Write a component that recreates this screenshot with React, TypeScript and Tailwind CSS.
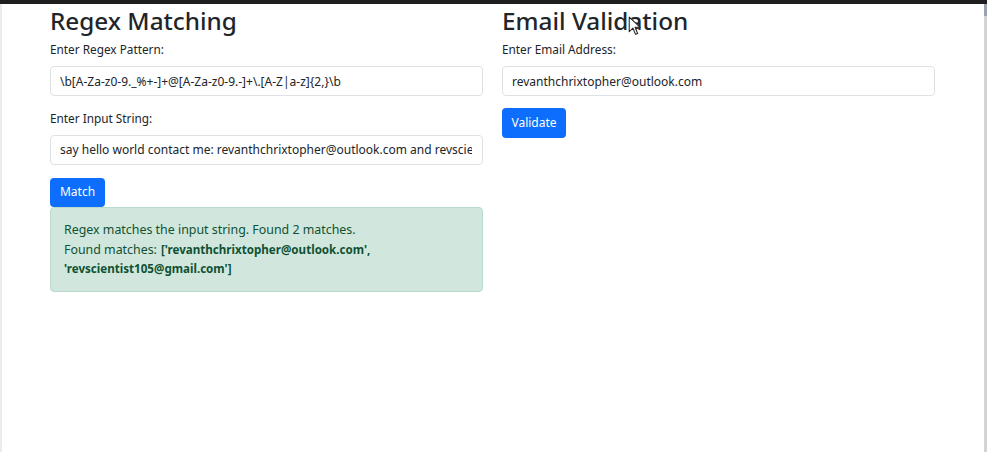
import React from "react";

const font = { fontFamily: '"Noto Sans", "Open Sans", Arial, sans-serif' };

function Label({ children }: { children: React.ReactNode }) {
  return <div className="text-[11.8px] leading-[19.5px] text-[#212529] mb-[6.5px]">{children}</div>;
}

function Field({ value }: { value: string }) {
  return (
    <input
      readOnly
      value={value}
      style={font}
      className="block w-full h-[30px] border border-[#dee2e6] rounded-[4px] pl-[9px] pr-[10px] text-[12px] text-[#212529] bg-white outline-none"
    />
  );
}

export default function App() {
  return (
    <div style={font} className="relative w-[987px] h-[452px] bg-white overflow-hidden flex flex-col">
      <div className="h-[4px] bg-[#1e1e1e] shrink-0" />
      <div className="flex flex-1">
        <div className="w-[2px] bg-[#ececec]" />
        <div className="flex-1 flex gap-[19px] pl-[48px]">
          <div className="w-[433px]">
            <h2 className="text-[24.3px] leading-[31px] pt-[1px] font-medium text-[#212529] mb-[4px]">Regex Matching</h2>
            <Label>Enter Regex Pattern:</Label>
            <Field value={"\\b[A-Za-z0-9._%+-]+@[A-Za-z0-9.-]+\\.[A-Z|a-z]{2,}\\b"} />
            <div className="h-[12.5px]" />
            <Label>Enter Input String:</Label>
            <Field value="say hello world contact me: revanthchrixtopher@outlook.com and revscientist105@gmail.com" />
            <button className="mt-[13px] h-[29px] w-[55px] rounded-[4px] bg-[#0d6efd] text-white text-[12px] leading-none">
              Match
            </button>
            <div className="border border-[#badbcc] bg-[#d1e7dd] rounded-[4px] px-[13px] py-[12.5px] text-[12.4px] leading-[19.5px] text-[#0f5132]">
              <div>Regex matches the input string. Found 2 matches.</div>
              <div>
                <span className="mr-[4px]">Found matches:</span>
                <b className="font-bold text-[11.6px]">['revanthchrixtopher@outlook.com',</b>
              </div>
              <div>
                <b className="font-bold text-[11.6px]">'revscientist105@gmail.com']</b>
              </div>
            </div>
          </div>
          <div className="w-[433px]">
            <h2 className="text-[24.3px] leading-[31px] pt-[1px] font-medium text-[#212529] mb-[4px]">Email Validation</h2>
            <Label>Enter Email Address:</Label>
            <Field value="revanthchrixtopher@outlook.com" />
            <button className="mt-[12px] h-[30px] w-[64px] rounded-[4px] bg-[#0d6efd] text-white text-[12px] leading-none">
              Validate
            </button>
          </div>
        </div>
        <div className="w-[3px] flex flex-col bg-[#d4d4d4]">
          <div className="h-[12px] bg-[#9aa3ad]" />
        </div>
      </div>
      <svg className="absolute left-[628px] top-[16px]" width="14" height="21" viewBox="0 0 13 20">
        <path d="M1 1 L1 15 L4.5 11.5 L7 17.5 L9 16.6 L6.6 10.8 L11.5 10.8 Z" fill="white" stroke="#222" strokeWidth="1" strokeLinejoin="round" />
      </svg>
    </div>
  );
}
